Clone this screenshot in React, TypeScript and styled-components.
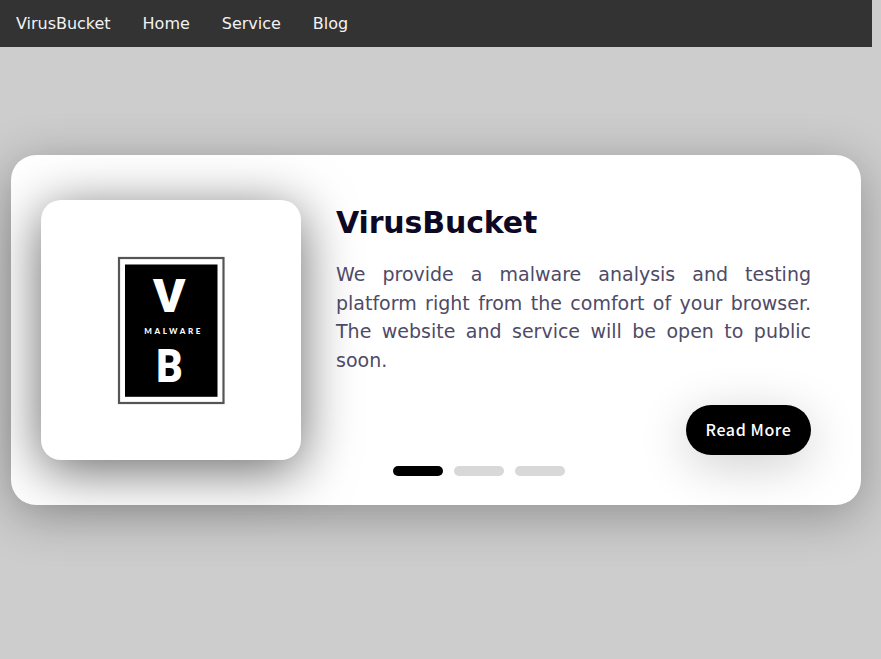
import React from "react";
import styled, { createGlobalStyle } from "styled-components";

const Global = createGlobalStyle`
  * { box-sizing: border-box; }
  html { background: #cdcdcd; }
  body { margin: 0; background: #cdcdcd; font-family: "DejaVu Sans", sans-serif; height: 659px; overflow: hidden; }
`;
const Page = styled.div`
  height: 659px;
  display: grid;
  grid-template-rows: 47px 1fr;
  width: 881px;
`;
const Nav = styled.nav`
  display: flex;
  width: 872px;
  height: 47px;
  background: #333;
`;
const NavLink = styled.a`
  padding: 14px 16px;
  color: #f2f2f2;
  font-size: 16px;
  line-height: 19px;
  letter-spacing: -0.02px;
`;
const Main = styled.main`
  padding: 108px 20px 0 11px;
`;
const Card = styled.section`
  display: flex;
  width: 850px;
  height: 350px;
  padding: 45px 50px 45px 30px;
  border-radius: 25px;
  background: #fff;
  box-shadow: 0 10px 50px rgba(0, 0, 0, 0.3);
`;
const Cover = styled.div`
  flex: none;
  width: 260px;
  height: 260px;
  border-radius: 20px;
  background: #fff;
  box-shadow: 0 10px 54px rgba(0, 0, 0, 0.6);
`;
const Content = styled.div`
  display: flex;
  flex-direction: column;
  width: 475px;
  margin-left: 35px;
`;
const Title = styled.h1`
  margin: 5px 0 0;
  font-size: 30px;
  line-height: 36px;
  letter-spacing: -0.15px;
  color: #0d0925;
`;
const Text = styled.p`
  margin: 19px 0 31px;
  font-size: 19px;
  line-height: 28.5px;
  text-align: justify;
  color: #4e4a67;
`;
const Button = styled.a`
  align-self: flex-end;
  display: flex;
  align-items: center;
  justify-content: center;
  flex: none;
  width: 125px;
  height: 50px;
  padding-bottom: 2px;
  border-radius: 50px;
  background: #000;
  color: #fff;
  font: 500 16px "Noto Sans CJK JP", sans-serif;
  letter-spacing: 0.6px;
  box-shadow: 0 10px 50px rgba(0, 0, 0, 0.2);
`;
const Bullets = styled.div`
  display: flex;
  gap: 11px;
  margin: 11px 0 0 57px;
`;
const Bullet = styled.span<{ $active?: boolean }>`
  width: 50px;
  height: 10px;
  border-radius: 5px;
  background: ${(p) => (p.$active ? "#000" : "#d8d8d8")};
`;
const Logo = styled.svg`
  display: block;
`;

export default function App() {
  return (
    <Page>
      <Global />
      <Nav>
        {["VirusBucket", "Home", "Service", "Blog"].map((t) => (
          <NavLink key={t}>{t}</NavLink>
        ))}
      </Nav>
      <Main>
        <Card>
          <Cover>
            <Logo width="260" height="260" viewBox="41 200 260 260">
              <rect x="119" y="258" width="104.500" height="145" fill="#fff" stroke="#555" strokeWidth="2.200" />
              <rect x="125" y="264.500" width="92.500" height="132.300" />
              <g fill="#fff" fontFamily="Roboto, sans-serif" fontWeight="900">
                <text x="153" y="311.700" fontSize="45.500" textLength="32.500" lengthAdjust="spacingAndGlyphs">V</text>
                <text x="144.300" y="334" fontSize="8" fontFamily="Lato, sans-serif" textLength="56" lengthAdjust="spacing">MALWARE</text>
                <text x="156.200" y="381.700" fontSize="45.500" textLength="26.500" lengthAdjust="spacingAndGlyphs">B</text>
              </g>
            </Logo>
          </Cover>
          <Content>
            <Title>VirusBucket</Title>
            <Text>
              We provide a malware analysis and testing platform right from the comfort of your browser. The website and
              service will be open to public soon.
            </Text>
            <Button>Read More</Button>
            <Bullets>
              <Bullet $active />
              <Bullet />
              <Bullet />
            </Bullets>
          </Content>
        </Card>
      </Main>
    </Page>
  );
}
